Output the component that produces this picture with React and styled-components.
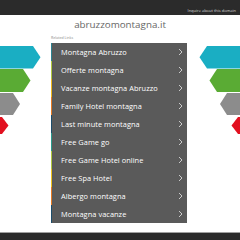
import React from "react";
import styled, { createGlobalStyle } from "styled-components";

const Global = createGlobalStyle`
  html, body { margin: 0; padding: 0; background: #ffffff; }
  body { font-family: "Open Sans", "Noto Sans", sans-serif; }
`;

const Page = styled.div`
  position: relative;
  width: 240px;
  height: 240px;
  overflow: hidden;
  display: flex;
  flex-direction: column;
  background: #ffffff;
`;

const TopBar = styled.header`
  height: 15px;
  flex: none;
  background: #2b2b2b;
  display: flex;
  justify-content: flex-end;
  align-items: flex-end;
  padding: 0 4px 2px 0;
  box-sizing: border-box;
`;

const Inquire = styled.a`
  font-size: 4px;
  line-height: 5px;
  color: #d6d6d6;
  text-decoration: none;
`;

const Main = styled.main`
  position: relative;
  z-index: 1;
  flex: 1;
  display: flex;
  flex-direction: column;
  align-items: center;
`;

const Title = styled.h1`
  margin: 0;
  height: 20px;
  line-height: 20px;
  font-size: 9.8px;
  font-weight: 400;
  color: #666666;
  text-align: center;
`;

const Section = styled.section`
  width: 136px;
  margin-right: 2px;
  display: flex;
  flex-direction: column;
`;

const Label = styled.div`
  height: 8px;
  line-height: 6px;
  font-size: 3.6px;
  color: #8a8a8a;
`;

const List = styled.ul`
  margin: 0;
  padding: 0;
  list-style: none;
  background: #5a5a5a;
`;

const Row = styled.li`
  height: 18px;
  display: flex;
  align-items: center;
  justify-content: space-between;
  box-sizing: border-box;
  padding: 0 4px 0 9px;
  border-left: 1.5px solid ${(p) => p.$accent};
  color: #ffffff;
  font-size: 7.4px;
  letter-spacing: 0.05px;
`;

const Chevron = () => (
  <svg width="5" height="8" viewBox="0 0 5 8">
    <polyline points="1,1 4,4 1,7" fill="none" stroke="#d8d8d8" strokeWidth="0.9" />
  </svg>
);

const Footer = styled.footer`
  height: 7px;
  flex: none;
  background: #2b2b2b;
  border-top: 1px solid #a0a0a0;
`;

const Deco = styled.svg`
  position: absolute;
  top: 0;
  ${(p) => (p.$side === "right" ? "right: 0;" : "left: 0;")}
  z-index: 0;
`;

const arrows = [
  { c: "#1aaec3", y0: 46, y1: 68.5, base: 33, tip: 40.5 },
  { c: "#5aab34", y0: 69, y1: 92, base: 23, tip: 30.5 },
  { c: "#8c8c8c", y0: 93, y1: 115, base: 13, tip: 20 },
  { c: "#e2101f", y0: 117, y1: 134, base: 2, tip: 8.5 },
];

const Decoration = ({ side }) => (
  <Deco $side={side} width="42" height="140" viewBox="0 0 42 140">
    <g transform={side === "right" ? "translate(42,0) scale(-1,1)" : undefined}>
      {arrows.map((a, i) => {
        const m = (a.y0 + a.y1) / 2;
        return (
          <polygon
            key={i}
            fill={a.c}
            points={`0,${a.y0} ${a.base},${a.y0} ${a.tip},${m} ${a.base},${a.y1} 0,${a.y1}`}
          />
        );
      })}
    </g>
  </Deco>
);

const links = [
  ["Montagna Abruzzo", "#2b8290"],
  ["Offerte montagna", "#b2c83e"],
  ["Vacanze montagna Abruzzo", "#f0b719"],
  ["Family Hotel montagna", "#e67a22"],
  ["Last minute montagna", "#1d4d6b"],
  ["Free Game go", "#2a9a8c"],
  ["Free Game Hotel online", "#b2c83e"],
  ["Free Spa Hotel", "#f0c21a"],
  ["Albergo montagna", "#e67a22"],
  ["Montagna vacanze", "#1d4d6b"],
];

export default function App() {
  return (
    <Page>
      <Global />
      <Decoration side="left" />
      <Decoration side="right" />
      <TopBar>
        <Inquire href="#">Inquire about this domain</Inquire>
      </TopBar>
      <Main>
        <Title>abruzzomontagna.it</Title>
        <Section>
          <Label>Related Links</Label>
          <List>
            {links.map(([t, c]) => (
              <Row key={t} $accent={c}>
                <span>{t}</span>
                <Chevron />
              </Row>
            ))}
          </List>
        </Section>
      </Main>
      <Footer />
    </Page>
  );
}
